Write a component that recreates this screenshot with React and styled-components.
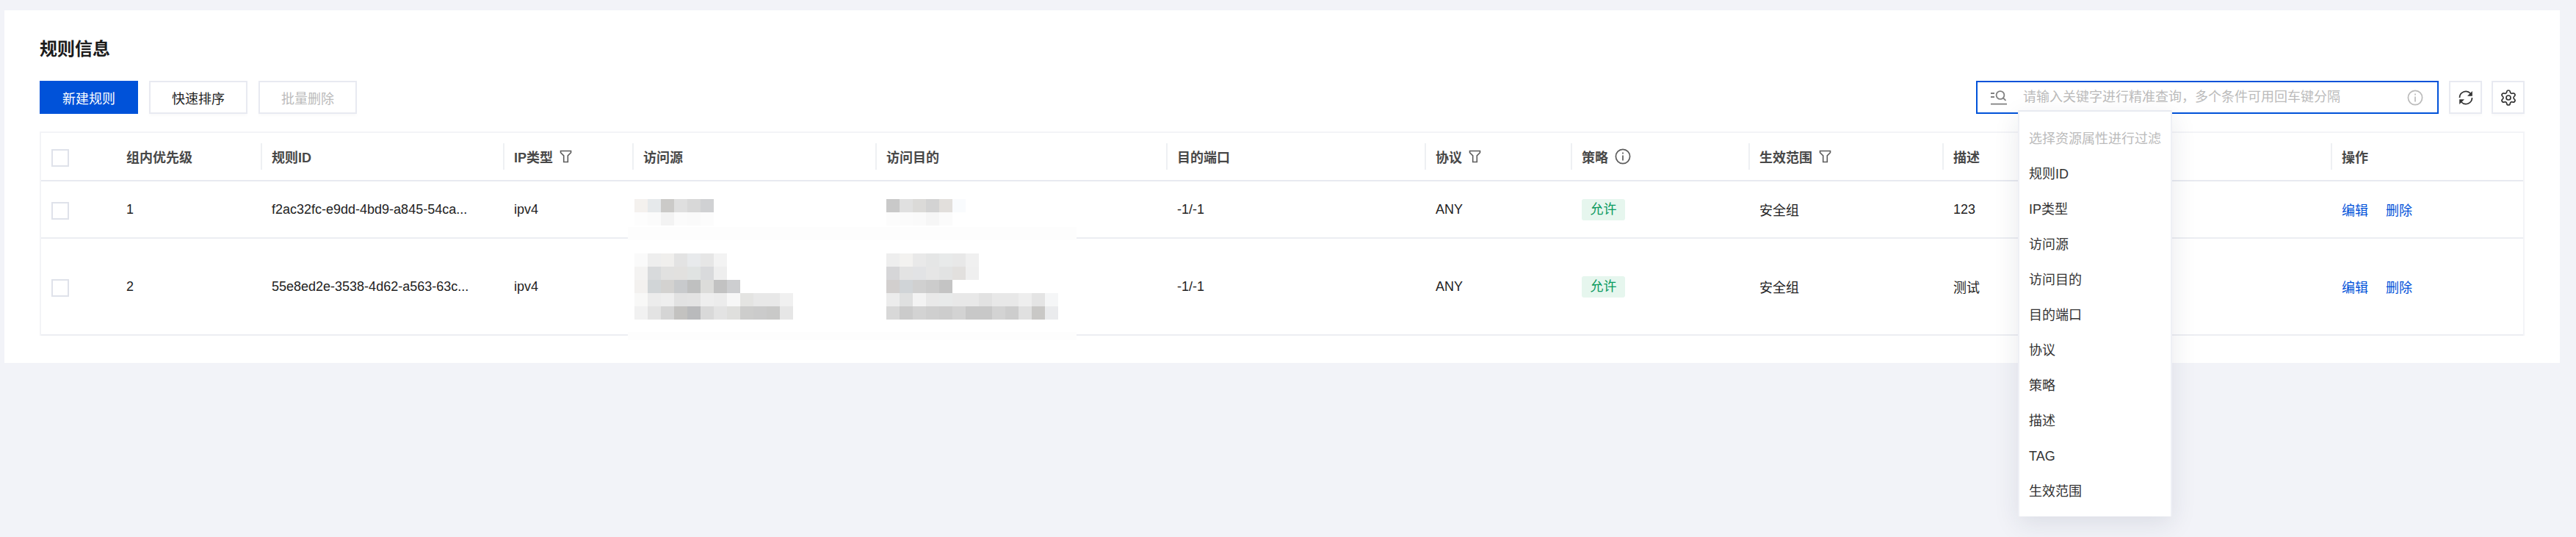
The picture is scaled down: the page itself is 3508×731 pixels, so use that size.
import styled, { createGlobalStyle } from "styled-components";
import { Settings } from "lucide-react";

const GlobalStyle = createGlobalStyle`
  html, body {
    margin: 0;
    padding: 0;
    background: #f2f3f8;
  }
  body {
    font-family: "Liberation Sans", "Noto Sans CJK SC", sans-serif;
    font-size: 18px;
    color: #222;
    overflow: hidden;
  }
`;

const Page = styled.div`
  height: 731px;
  padding: 14px 22px 0 6px;
  box-sizing: border-box;
`;

const Card = styled.section`
  background: #fff;
  height: 480px;
  padding: 35px 48px 0;
  box-sizing: border-box;
`;

const Title = styled.h2`
  margin: 0 0 25px;
  font-size: 24px;
  line-height: 36px;
  font-weight: 700;
  color: #1c1c1c;
`;

const Toolbar = styled.div`
  display: flex;
  justify-content: space-between;
  align-items: center;
  height: 45px;
  margin-bottom: 24px;
`;

const ButtonGroup = styled.div`
  display: flex;
  gap: 15px;
`;

const Button = styled.button`
  width: 134px;
  height: 45px;
  padding: 0;
  font: inherit;
  box-sizing: border-box;
  color: ${(p) => (p.$primary ? "#fff" : p.disabled ? "#bbb" : "#222")};
  background: ${(p) => (p.$primary ? "#0052d9" : "#fff")};
  border: 2px solid ${(p) => (p.$primary ? "#0052d9" : "#e8eaf1")};
  box-shadow: ${(p) => (p.$primary ? "none" : "0 3px 3px rgba(0, 0, 0, 0.02)")};
`;

const SearchArea = styled.div`
  display: flex;
  align-items: center;
`;

const SearchBox = styled.div`
  position: relative;
  display: flex;
  align-items: center;
  width: 630px;
  height: 45px;
  padding: 0 19px 0 17px;
  margin-right: 14px;
  box-sizing: border-box;
  border: 2px solid #0052d9;
`;

const SearchInput = styled.input`
  flex: 1;
  min-width: 0;
  margin-left: 21px;
  padding: 0;
  border: none;
  outline: none;
  font: inherit;
  background: transparent;
  &::placeholder {
    color: #bbb;
    opacity: 1;
  }
`;

const IconButton = styled.button`
  display: flex;
  align-items: center;
  justify-content: center;
  width: 45px;
  height: 45px;
  padding: 0;
  box-sizing: border-box;
  background: #fff;
  color: #333;
  border: 2px solid #e8eaf1;
  box-shadow: 0 3px 3px rgba(0, 0, 0, 0.02);
  & + & {
    margin-left: 13px;
  }
`;

const Dropdown = styled.ul`
  position: absolute;
  z-index: 5;
  left: 55px;
  top: 38px;
  width: 210px;
  height: 553px;
  margin: 0;
  padding: 13px 0 0 13px;
  box-sizing: border-box;
  list-style: none;
  background: #fff;
  border-top: 2px solid #e8eaf1;
  border-left: 2px solid #eef0f5;
  border-right: 2px solid #eef0f5;
  box-shadow: 0 10px 32px rgba(30, 40, 70, 0.1);
`;

const DropdownItem = styled.li`
  height: 48px;
  line-height: 48px;
  white-space: nowrap;
  color: ${(p) => (p.$hint ? "#bbb" : "#333")};
`;

const TableFrame = styled.div`
  position: relative;
  border: 2px solid #f3f4f7;
  border-bottom: none;
`;

const Table = styled.table`
  width: 3380px;
  table-layout: fixed;
  border-collapse: separate;
  border-spacing: 0;
`;

const HeadCell = styled.th`
  position: relative;
  height: 66px;
  padding: 0 0 0 ${(p) => (p.$tight ? 14 : 15)}px;
  box-sizing: border-box;
  text-align: left;
  font-weight: 700;
  color: #484848;
  white-space: nowrap;
  border-bottom: 2px solid #e8eaf0;
  &::before {
    content: "";
    display: ${(p) => (p.$noDivider ? "none" : "block")};
    position: absolute;
    left: 0;
    top: 14px;
    width: 2px;
    height: 36px;
    background: #eef0f3;
  }
`;

const HeadInner = styled.span`
  display: inline-flex;
  align-items: center;
  gap: 9px;
`;

const Cell = styled.td`
  height: ${(p) => p.$height}px;
  padding: 0 0 0 ${(p) => (p.$tight ? 14 : 15)}px;
  box-sizing: border-box;
  white-space: nowrap;
  color: #222;
  border-bottom: 2px solid #eceef2;
`;

const Checkbox = styled.span`
  display: block;
  width: 24px;
  height: 24px;
  margin-top: 4px;
  box-sizing: border-box;
  background: #fff;
  border: 2px solid #dfe2ea;
`;

const Tag = styled.span`
  display: inline-block;
  width: 59px;
  height: 29px;
  line-height: 29px;
  text-align: center;
  border-radius: 3px;
  color: #0b9a5e;
  background: #e6f6ee;
`;

const ActionLink = styled.a`
  color: #0052d9;
  & + & {
    margin-left: 24px;
  }
`;

const MosaicSvg = styled.svg`
  display: block;
  margin-left: ${(p) => p.$left}px;
  margin-top: ${(p) => p.$shift}px;
`;

const Patch = styled.div`
  position: absolute;
  left: 799px;
  width: 611px;
  top: ${(p) => p.$top}px;
  height: ${(p) => p.$height}px;
  background: #fdfdfd;
`;

const TILE = 18;

const Mosaic = ({ rows, left = 0, shift = 0 }) => (
  <MosaicSvg
    $left={left}
    $shift={shift}
    width={Math.max(...rows.map((r) => r.length)) * TILE}
    height={rows.length * TILE}
    shapeRendering="crispEdges"
  >
    {rows.map((row, y) =>
      row.map((c, x) => (
        <rect key={`${x}-${y}`} x={x * TILE} y={y * TILE} width={TILE} height={TILE} fill={`#${c}`} />
      ))
    )}
  </MosaicSvg>
);

const FilterIcon = () => (
  <svg width="17" height="18" viewBox="0 0 17 18" fill="none" stroke="#5c5c5c" strokeWidth="1.6">
    <path d="M1.5 1.5h14v2.2l-4.2 4.2v8.6H5.7V7.9L1.5 3.7z" />
  </svg>
);

const InfoIcon = ({ color = "#5c5c5c" }) => (
  <svg width="22" height="22" viewBox="0 0 22 22" fill="none" stroke={color} strokeWidth="1.7">
    <circle cx="11" cy="11" r="9.6" />
    <path d="M11 9.5v7M11 5.5v2" />
  </svg>
);

const SearchIcon = () => (
  <svg width="24" height="20" viewBox="0 0 24 20" fill="none" stroke="#808080" strokeWidth="1.8">
    <path d="M1 4h5M1 9h5M1 18.6h22" />
    <circle cx="14" cy="6.5" r="5.4" />
    <path d="M18 10.5l3.5 3.3" />
  </svg>
);

const RefreshIcon = () => (
  <svg width="24" height="24" viewBox="0 0 24 24" fill="none" stroke="#333" strokeWidth="1.7">
    <path d="M3.5 12a8.5 8.5 0 0 1 14.8-5.7" />
    <path d="M20.5 12a8.5 8.5 0 0 1-14.8 5.7" />
    <polygon points="20.8,3 20.8,9.8 14,9.8" fill="#333" stroke="none" />
    <polygon points="3.2,21 3.2,14.2 10,14.2" fill="#333" stroke="none" />
  </svg>
);

const columns = [
  { width: 102, noDivider: true, tight: true },
  { width: 197, label: "组内优先级", noDivider: true, tight: true },
  { width: 330, label: "规则ID" },
  { width: 176, label: "IP类型", icon: <FilterIcon /> },
  { width: 331, label: "访问源" },
  { width: 396, label: "访问目的" },
  { width: 352, label: "目的端口" },
  { width: 199, label: "协议", icon: <FilterIcon /> },
  { width: 242, label: "策略", icon: <InfoIcon /> },
  { width: 264, label: "生效范围", icon: <FilterIcon /> },
  { width: 529, label: "描述" },
  { width: 262, label: "操作" },
];

const rules = [
  {
    height: 78,
    priority: "1",
    id: "f2ac32fc-e9dd-4bd9-a845-54ca...",
    note: "123",
    shift: 8,
    source: [
      ["f4f1ee", "e6e9eb", "cbcac8", "dfdfdf", "d8d8d8", "d0d1d3"],
      ["fdfdfd", "fbfbfb", "f3f3f3", "fbfbfb", "fafafa", "fcfcfc"],
    ],
    target: [
      ["c9c9c9", "e0e0e0", "dbdad8", "d3d3d3", "e2dfdc", "f9fbfd"],
      ["fcfcfc", "fbfbfb", "fafafa", "f6f6f6", "fbfbfb"],
    ],
  },
  {
    height: 132,
    priority: "2",
    id: "55e8ed2e-3538-4d62-a563-63c...",
    note: "测试",
    shift: 0,
    source: [
      ["fafafa", "eeeeee", "f0efed", "e3e3e3", "e8eaec", "e6e6e6", "f3f3f3"],
      ["f4f3f2", "d8dadc", "e1e1e0", "e2e1df", "e0e3e2", "d9dadc", "eeeeee"],
      ["f3f1ef", "d1d5d7", "d3d2d0", "c8cacc", "bfc0c0", "dcdcda", "c2c2c2", "cdced0"],
      ["f8f8f7", "ececec", "eeeeee", "e2e2e2", "e3e3e3", "eeeeee", "ececec", "f7f7f7", "e4e4e2", "e8e8e8", "e8e8e8", "f0f0f0"],
      ["f1f1f1", "e3e3e3", "d5d5d5", "c3c2c0", "b9babc", "d9d9d9", "e3e3e3", "dfdfdd", "cdcdcc", "cbcbcb", "c9c9c8", "e6e6e6"],
    ],
    target: [
      ["eeeeee", "f3f2f0", "e9e9e9", "e5e6e6", "e8eaea", "e8e8e8", "f0f0f0"],
      ["d6d6d8", "e3e3e3", "e2e3e5", "e6e6e6", "e2e3e3", "e2e0de", "efefef"],
      ["d2cfce", "d0d4d7", "d0d0d0", "cccccc", "c4c4c4"],
      ["ececec", "dfe0e0", "f3f3f3", "e9e9e9", "e8eaea", "e8e8e8", "e8e8e8", "e2e2e2", "e8e8e8", "e8e8e8", "eeeeee", "e4e4e4", "f5f6f7"],
      ["d8d8d8", "cbcbcb", "d3d3d3", "cfcfcf", "cdcdcd", "d3d3d3", "c8c8c8", "c8c8c8", "d3d3d3", "cdcdcd", "e0e0e0", "c9c8c6", "eaebed"],
    ],
  },
];

const filterOptions = ["规则ID", "IP类型", "访问源", "访问目的", "目的端口", "协议", "策略", "描述", "TAG", "生效范围"];

const App = () => {
  return (
    <Page>
      <GlobalStyle />
      <Card>
        <Title>规则信息</Title>
        <Toolbar>
          <ButtonGroup>
            <Button $primary>新建规则</Button>
            <Button>快速排序</Button>
            <Button disabled>批量删除</Button>
          </ButtonGroup>
          <SearchArea>
            <SearchBox>
              <SearchIcon />
              <SearchInput placeholder="请输入关键字进行精准查询，多个条件可用回车键分隔" />
              <InfoIcon color="#bbb" />
              <Dropdown>
                <DropdownItem $hint>选择资源属性进行过滤</DropdownItem>
                {filterOptions.map((item) => (
                  <DropdownItem key={item}>{item}</DropdownItem>
                ))}
              </Dropdown>
            </SearchBox>
            <IconButton>
              <RefreshIcon />
            </IconButton>
            <IconButton>
              <Settings size={24} strokeWidth={1.7} />
            </IconButton>
          </SearchArea>
        </Toolbar>
        <TableFrame>
          <Table>
            <colgroup>
              {columns.map((col, i) => (
                <col key={i} style={{ width: col.width }} />
              ))}
            </colgroup>
            <thead>
              <tr>
                {columns.map((col, i) => (
                  <HeadCell key={i} $noDivider={col.noDivider} $tight={col.tight}>
                    {col.label ? (
                      <HeadInner>
                        {col.label}
                        {col.icon}
                      </HeadInner>
                    ) : (
                      <Checkbox />
                    )}
                  </HeadCell>
                ))}
              </tr>
            </thead>
            <tbody>
              {rules.map((rule) => (
                <tr key={rule.id}>
                  <Cell $height={rule.height} $tight>
                    <Checkbox />
                  </Cell>
                  <Cell $height={rule.height} $tight>{rule.priority}</Cell>
                  <Cell $height={rule.height}>{rule.id}</Cell>
                  <Cell $height={rule.height}>ipv4</Cell>
                  <Cell $height={rule.height}>
                    <Mosaic rows={rule.source} left={-12} shift={rule.shift} />
                  </Cell>
                  <Cell $height={rule.height}>
                    <Mosaic rows={rule.target} shift={rule.shift} />
                  </Cell>
                  <Cell $height={rule.height}>-1/-1</Cell>
                  <Cell $height={rule.height}>ANY</Cell>
                  <Cell $height={rule.height}>
                    <Tag>允许</Tag>
                  </Cell>
                  <Cell $height={rule.height}>安全组</Cell>
                  <Cell $height={rule.height}>{rule.note}</Cell>
                  <Cell $height={rule.height}>
                    <ActionLink>编辑</ActionLink>
                    <ActionLink>删除</ActionLink>
                  </Cell>
                </tr>
              ))}
            </tbody>
          </Table>
          <Patch $top={128} $height={18} />
          <Patch $top={271} $height={11} />
        </TableFrame>
      </Card>
    </Page>
  );
};

export default App;
